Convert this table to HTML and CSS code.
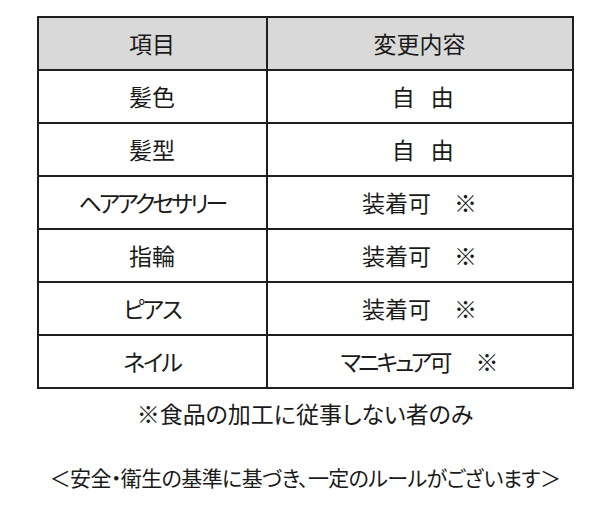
FILE: index.html
```html
<!DOCTYPE html>
<html lang="ja">
<head>
<meta charset="utf-8">
<link rel="stylesheet" href="styles.css">
</head>
<body>
<div class="page">
  <table class="rules">
    <thead>
      <tr><th class="col-item">項目</th><th>変更内容</th></tr>
    </thead>
    <tbody>
      <tr><td>髪色</td><td class="spaced">自　由</td></tr>
      <tr><td>髪型</td><td class="spaced">自　由</td></tr>
      <tr><td class="kana">ヘアアクセサリー</td><td>装着可　※</td></tr>
      <tr><td>指輪</td><td>装着可　※</td></tr>
      <tr><td class="kana-s">ピアス</td><td>装着可　※</td></tr>
      <tr><td class="kana-s">ネイル</td><td><span class="kana">マニキュア</span>可　※</td></tr>
    </tbody>
  </table>
  <p class="note">※食品の加工に従事しない者のみ</p>
  <p class="footer">＜安全・衛生の基準に基づき、一定のルールがございます＞</p>
</div>
</body>
</html>
```

FILE: styles.css
```css
html, body {
  margin: 0;
  padding: 0;
  background: #ffffff;
}
body {
  font-family: "Noto Sans CJK JP", "Noto Sans", sans-serif;
  color: #1a1a1a;
}
.page {
  width: 599px;
  height: 507px;
  padding: 16px 0 0 11px;
  box-sizing: border-box;
  display: flex;
  flex-direction: column;
  align-items: center;
}
.rules {
  border-collapse: collapse;
  width: 537px;
  border: 2px solid #1e1e1e;
}
.rules th,
.rules td {
  border: 2px solid #1e1e1e;
  height: 51px;
  padding: 0;
  text-align: center;
  vertical-align: middle;
  font-size: 23px;
  font-weight: normal;
  line-height: 1;
}
.rules th {
  background: #d9d9d9;
}
.col-item {
  width: 227px;
}
.rules td.spaced {
  letter-spacing: -3.5px;
  padding-left: 3px;
}
.kana {
  letter-spacing: -3px;
  font-feature-settings: "palt";
}
.kana-s {
  letter-spacing: -2px;
  font-feature-settings: "palt";
}
.note {
  margin: 13px 0 0 0;
  font-size: 23px;
  line-height: 1;
  font-feature-settings: "palt";
}
.footer {
  margin: 42px 0 0 0;
  font-size: 21px;
  line-height: 1;
  letter-spacing: -0.6px;
  font-feature-settings: "palt";
}
```
